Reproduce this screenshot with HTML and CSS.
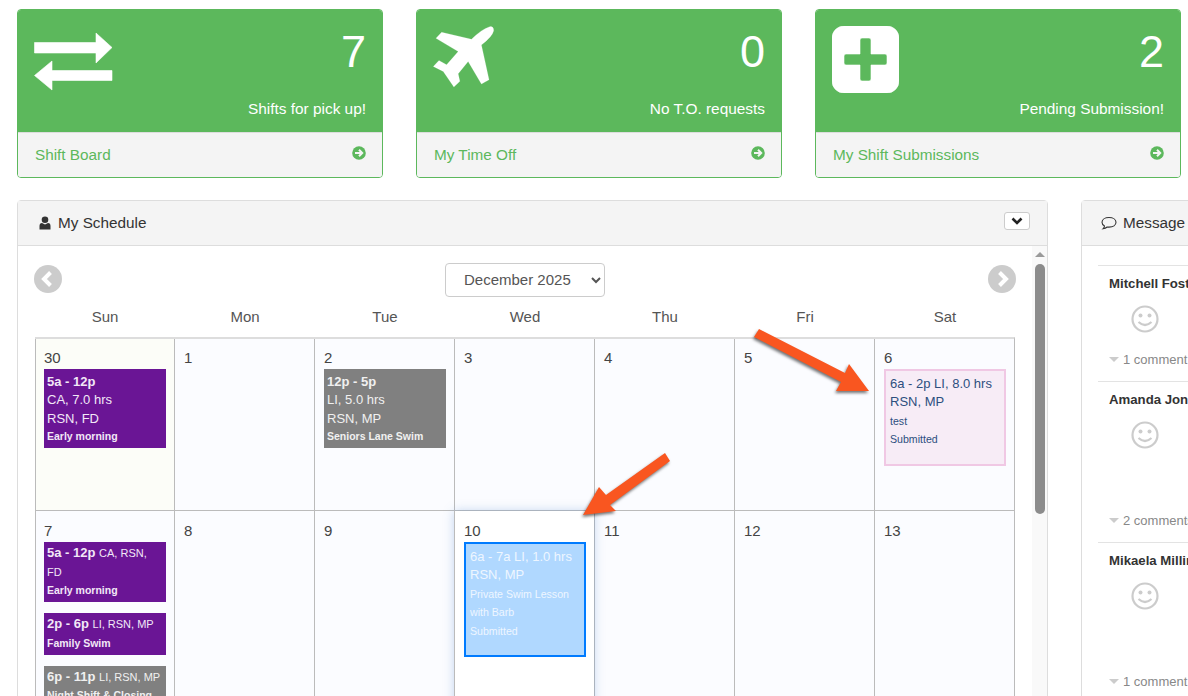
FILE: index.html
```html
<!DOCTYPE html>
<html lang="en">
<head>
<meta charset="utf-8">
<title>Dashboard</title>
<link rel="stylesheet" href="styles.css">
</head>
<body>
<div class="page">
  <div class="cards">
    <div class="card">
      <div class="card-top">
        <svg class="card-icon swap" viewBox="0 0 80 64" width="80" height="64"><path class="solid" d="M0.500 10.500H62V1L78 15.500L62 31V21H0.500ZM18 29V38.500H78V48.500H18V58L0.500 43.500Z"/></svg>
        <div class="card-info"><div class="num">7</div><div class="sub">Shifts for pick up!</div></div>
      </div>
      <div class="card-foot"><span>Shift Board</span><svg class="go" viewBox="0 0 14 14" width="14" height="14"><circle cx="7" cy="7" r="6.800"/><path d="M3 7H10M7 3.800L10.200 7L7 10.200"/></svg></div>
    </div>
    <div class="card">
      <div class="card-top">
        <svg class="card-icon" viewBox="99 78 190 190" width="63" height="63"><path class="solid" d="M270 80Q282 78 282 92Q278 110 245 135L268 240L245 253L205 185L175 222L180 245L162 262L130 215L100 200L117 182L140 195L175 155L108 115L125 97L215 118Q245 88 270 80Z"/></svg>
        <div class="card-info"><div class="num">0</div><div class="sub">No T.O. requests</div></div>
      </div>
      <div class="card-foot"><span>My Time Off</span><svg class="go" viewBox="0 0 14 14" width="14" height="14"><circle cx="7" cy="7" r="6.800"/><path d="M3 7H10M7 3.800L10.200 7L7 10.200"/></svg></div>
    </div>
    <div class="card">
      <div class="card-top">
        <svg class="card-icon" viewBox="0 0 67 67" width="67" height="67"><path class="solid" fill-rule="evenodd" d="M12 0H55A12 12 0 0 1 67 12V55A12 12 0 0 1 55 67H12A12 12 0 0 1 0 55V12A12 12 0 0 1 12 0ZM30 12Q28 12 28 14V28H14Q12 28 12 30V37Q12 39 14 39H28V53Q28 55 30 55H37Q39 55 39 53V39H53Q55 39 55 37V30Q55 28 53 28H39V14Q39 12 37 12Z"/></svg>
        <div class="card-info"><div class="num">2</div><div class="sub">Pending Submission!</div></div>
      </div>
      <div class="card-foot"><span>My Shift Submissions</span><svg class="go" viewBox="0 0 14 14" width="14" height="14"><circle cx="7" cy="7" r="6.800"/><path d="M3 7H10M7 3.800L10.200 7L7 10.200"/></svg></div>
    </div>
  </div>

  <div class="panels">
    <section class="panel schedule">
      <header class="panel-head">
        <svg class="head-icon" viewBox="0 0 12 14" width="12" height="14"><circle cx="6" cy="3.800" r="3.300"/><path d="M0.500 13.500V10Q0.500 7 3 7L6 8.500L9 7Q11.500 7 11.500 10V13.500Z"/></svg>
        <span class="head-title">My Schedule</span>
        <button class="collapse" type="button" aria-label="Collapse"><svg viewBox="0 0 12 8" width="12" height="8"><path d="M1.500 1.500L6 6L10.500 1.500"/></svg></button>
      </header>
      <div class="panel-body">
        <div class="calendar">
          <div class="cal-nav">
            <svg class="nav-btn" viewBox="0 0 28 28" width="28" height="28"><circle cx="14" cy="14" r="14"/><path d="M16.500 7.500L10 14L16.500 20.500"/></svg>
            <select class="month"><option>December 2025</option></select>
            <svg class="nav-btn" viewBox="0 0 28 28" width="28" height="28"><circle cx="14" cy="14" r="14"/><path d="M11.500 7.500L18 14L11.500 20.500"/></svg>
          </div>
          <div class="days"><div>Sun</div><div>Mon</div><div>Tue</div><div>Wed</div><div>Thu</div><div>Fri</div><div>Sat</div></div>
          <div class="grid">
            <div class="cell other"><div class="date">30</div>
              <div class="ev purple"><b>5a - 12p</b><br>CA, 7.0 hrs<br>RSN, FD<div class="note">Early morning</div></div>
            </div>
            <div class="cell"><div class="date">1</div></div>
            <div class="cell"><div class="date">2</div>
              <div class="ev gray"><b>12p - 5p</b><br>LI, 5.0 hrs<br>RSN, MP<div class="note">Seniors Lane Swim</div></div>
            </div>
            <div class="cell"><div class="date">3</div></div>
            <div class="cell"><div class="date">4</div></div>
            <div class="cell"><div class="date">5</div></div>
            <div class="cell"><div class="date">6</div>
              <div class="ev pink">6a - 2p LI, 8.0 hrs<br>RSN, MP<div class="plain">test</div><div class="plain">Submitted</div></div>
            </div>
            <div class="cell tall"><div class="date">7</div>
              <div class="ev compact purple"><b>5a - 12p</b> <small>CA, RSN, FD</small><div class="note">Early morning</div></div>
              <div class="ev compact purple"><b>2p - 6p</b> <small>LI, RSN, MP</small><div class="note">Family Swim</div></div>
              <div class="ev compact gray"><b>6p - 11p</b> <small>LI, RSN, MP</small><div class="note">Night Shift &amp; Closing</div></div>
            </div>
            <div class="cell tall"><div class="date">8</div></div>
            <div class="cell tall"><div class="date">9</div></div>
            <div class="cell tall active"><div class="date">10</div>
              <div class="ev blue">6a - 7a LI, 1.0 hrs<br>RSN, MP<div class="plain">Private Swim Lesson with Barb</div><div class="plain">Submitted</div></div>
            </div>
            <div class="cell tall"><div class="date">11</div></div>
            <div class="cell tall"><div class="date">12</div></div>
            <div class="cell tall"><div class="date">13</div></div>
          </div>
        </div>
        <div class="scrollbar"><div class="scroll-up"></div><div class="scroll-thumb"></div></div>
      </div>
    </section>

    <section class="panel side">
      <header class="panel-head">
        <svg class="head-icon chat" viewBox="0 0 16 14" width="16" height="14"><path d="M8 1.500C4 1.500 1 3.500 1 6.300C1 8 2 9.200 3.500 10C3.400 11 3 11.800 2 12.800C4 12.500 5.300 11.800 6.200 11C6.800 11.100 7.400 11.100 8 11.100C12 11.100 15 9.100 15 6.300C15 3.500 12 1.500 8 1.500Z"/></svg>
        <span class="head-title">Message Board</span>
      </header>
      <div class="side-body">
        <article class="msg m1">
          <div class="who">Mitchell Foster</div>
          <svg class="smile" viewBox="0 0 28 28" width="28" height="28"><circle cx="14" cy="14" r="12.500"/><circle class="eye" cx="9.500" cy="10.500" r="2"/><circle class="eye" cx="18.500" cy="10.500" r="2"/><path d="M7.500 17Q14 23 20.500 17"/></svg>
          <div class="count"><i class="tri"></i>1 comment</div>
        </article>
        <article class="msg m2">
          <div class="who">Amanda Jones</div>
          <svg class="smile" viewBox="0 0 28 28" width="28" height="28"><circle cx="14" cy="14" r="12.500"/><circle class="eye" cx="9.500" cy="10.500" r="2"/><circle class="eye" cx="18.500" cy="10.500" r="2"/><path d="M7.500 17Q14 23 20.500 17"/></svg>
          <div class="count"><i class="tri"></i>2 comments</div>
        </article>
        <article class="msg m2">
          <div class="who">Mikaela Milliner</div>
          <svg class="smile" viewBox="0 0 28 28" width="28" height="28"><circle cx="14" cy="14" r="12.500"/><circle class="eye" cx="9.500" cy="10.500" r="2"/><circle class="eye" cx="18.500" cy="10.500" r="2"/><path d="M7.500 17Q14 23 20.500 17"/></svg>
          <div class="count"><i class="tri"></i>1 comment</div>
        </article>
      </div>
    </section>
  </div>

  <svg class="annot" viewBox="0 0 1188 696" width="1188" height="696" aria-hidden="true">
    <path d="M759 329L845 373L849 364L869 391L836 391L841 382L754 337Z"/>
    <path d="M665 453L670 461L610 505L616 511L583 515L599 487L606 495Z"/>
  </svg>
</div>
</body>
</html>
```

FILE: styles.css
```css
* { box-sizing: border-box; }
html, body { margin: 0; height: 696px; overflow: hidden; background: #fff; }
body { font-family: "Liberation Sans", Arial, sans-serif; color: #333; }

.page { position: relative; width: 1188px; height: 696px; overflow: hidden; padding: 9px 0 0 17px; }

.cards { display: flex; gap: 33px; }
.card { width: 366px; height: 169px; border: 1px solid #5cb85c; border-radius: 4px; overflow: hidden; display: flex; flex-direction: column; }
.card-top { height: 122.500px; background: #5cb85c; color: #fff; display: flex; justify-content: space-between; padding: 16px 16px 0; border-bottom: 1px solid #ddd; }
.card-icon { flex: none; display: block; }
.swap { margin-top: 6px; }
.solid { fill: #fff; stroke: #fff; stroke-width: .6; stroke-linejoin: round; }
.card-info { text-align: right; }
.num { font-size: 45px; line-height: 50px; margin-top: 1px; }
.sub { font-size: 15.400px; line-height: 18px; margin-top: 23px; }
.card-foot { flex: 1; background: #f4f4f4; color: #5cb85c; font-size: 15.300px; display: flex; justify-content: space-between; padding: 13px 16px 0 17px; }
.go { display: block; }
.go circle { fill: #5cb85c; }
.go path { fill: none; stroke: #f4f4f4; stroke-width: 2; }

.panels { display: flex; gap: 33px; margin-top: 22px; width: 1500px; }
.panel { border: 1px solid #ddd; border-radius: 4px; background: #fff; flex: none; }
.schedule { width: 1031px; }
.side { width: 400px; }
.panel-head { height: 45px; background: #f4f4f4; border-bottom: 1px solid #ddd; display: flex; align-items: center; padding: 0 17px 0 21px; }
.head-icon { display: block; fill: #333; margin-right: 7px; }
.chat { fill: none; stroke: #333; stroke-width: 1.100; margin-left: -2px; margin-right: 6px; }
.head-title { font-size: 15.300px; flex: 1; }
.collapse { width: 26px; height: 18px; margin-top: -4px; background: #fff; border: 1px solid #ccc; border-radius: 3px; padding: 0; display: flex; align-items: center; justify-content: center; }
.collapse svg { display: block; fill: none; stroke: #222; stroke-width: 2.600; }

.panel-body { display: flex; align-items: flex-start; }
.calendar { width: 1015px; padding: 17px 0 0 16px; }
.cal-nav { display: flex; justify-content: space-between; align-items: center; width: 982px; }
.nav-btn { display: block; margin-top: -3px; }
.nav-btn circle { fill: #ccc; }
.nav-btn path { fill: none; stroke: #fff; stroke-width: 4; }
.month { width: 160px; height: 34px; background: #fff; border: 1px solid #ccc; border-radius: 4px; color: #555; font: 15px "Liberation Sans", Arial, sans-serif; padding: 0 14px 2px; }

.days { display: grid; grid-template-columns: repeat(7, 140px); margin-left: 1px; height: 40px; padding-bottom: 2px; align-items: center; text-align: center; font-size: 15px; color: #555; }
.grid { display: grid; grid-template-columns: 139px repeat(6, 140px); margin-left: 1px; width: 980px; border-top: 2px solid #ddd; border-right: 1px solid #bbb; }
.cell { position: relative; height: 172px; background: #fbfcff; border-left: 1px solid #bbb; border-bottom: 1px solid #bbb; padding: 8px 9px 0; }
.cell:nth-child(7n+1) { padding-left: 8px; }
.cell.other { background: #fcfdf8; }
.cell.tall { height: 200px; }
.cell.tall .date { line-height: 23px; }
.cell.active { background: #fff; box-shadow: 0 0 10px rgba(90, 140, 210, .35); z-index: 1; }
.date { font-size: 15px; line-height: 22px; color: #444; }

.ev { width: 122px; font-size: 13px; line-height: 18.500px; padding: 3.500px 3px 0; }
.ev + .ev { margin-top: 11px; }
.ev small { font-size: 11px; }
.note { font-size: 10.500px; font-weight: bold; margin-top: -1px; }
.plain { font-size: 10.600px; }
.purple { background: #6a1595; color: #f2e8f7; height: 79px; }
.gray { background: #808080; color: #f0f0f0; height: 79px; }
.compact { height: auto; padding: 2px 3px 2.500px; }
.compact .note { margin-top: 0; }
.pink { background: #f7ecf6; border: 2px solid #f0c8e4; color: #2d4f7e; height: 97px; padding: 3.500px 3px 0 4px; }
.blue { background: #b0d8ff; border: 2px solid #007bff; color: #eef6ff; height: 115px; padding: 3.500px 3px 0 4px; }

.scrollbar { width: 15px; height: 460px; background: #f9f9f9; margin-left: 0; padding: 6px 2px 0; }
.scroll-up { width: 0; height: 0; margin: 0 auto; border-left: 5px solid transparent; border-right: 5px solid transparent; border-bottom: 5px solid #9a9a9a; }
.scroll-thumb { width: 10px; height: 250px; margin: 7px auto 0; background: #8c8c8c; border-radius: 5px; }

.side-body { padding: 19px 0 0 16px; }
.msg { border-top: 1px solid #e3e3e3; position: relative; height: 116px; padding-top: 10px; }
.m2 { height: 161px; }
.who { font-size: 13.200px; font-weight: bold; line-height: 16px; white-space: nowrap; color: #333; padding-left: 11px; }
.smile { display: block; margin: 13px 0 0 33px; }
.smile circle { fill: none; stroke: #ccc; stroke-width: 2.200; }
.smile .eye { fill: #ccc; stroke: none; }
.smile path { fill: none; stroke: #ccc; stroke-width: 2.200; }
.count { font-size: 13px; color: #888; line-height: 16px; position: absolute; left: 11px; bottom: 13px; white-space: nowrap; }
.tri { display: inline-block; width: 0; height: 0; margin-right: 4px; vertical-align: 2px; border-left: 5px solid transparent; border-right: 5px solid transparent; border-top: 5px solid #ccc; }

.annot { position: absolute; left: 0; top: 0; z-index: 5; pointer-events: none; }
.annot path { fill: #f95620; filter: drop-shadow(-1px 2px 1.500px rgba(0, 0, 0, .55)); }
```
